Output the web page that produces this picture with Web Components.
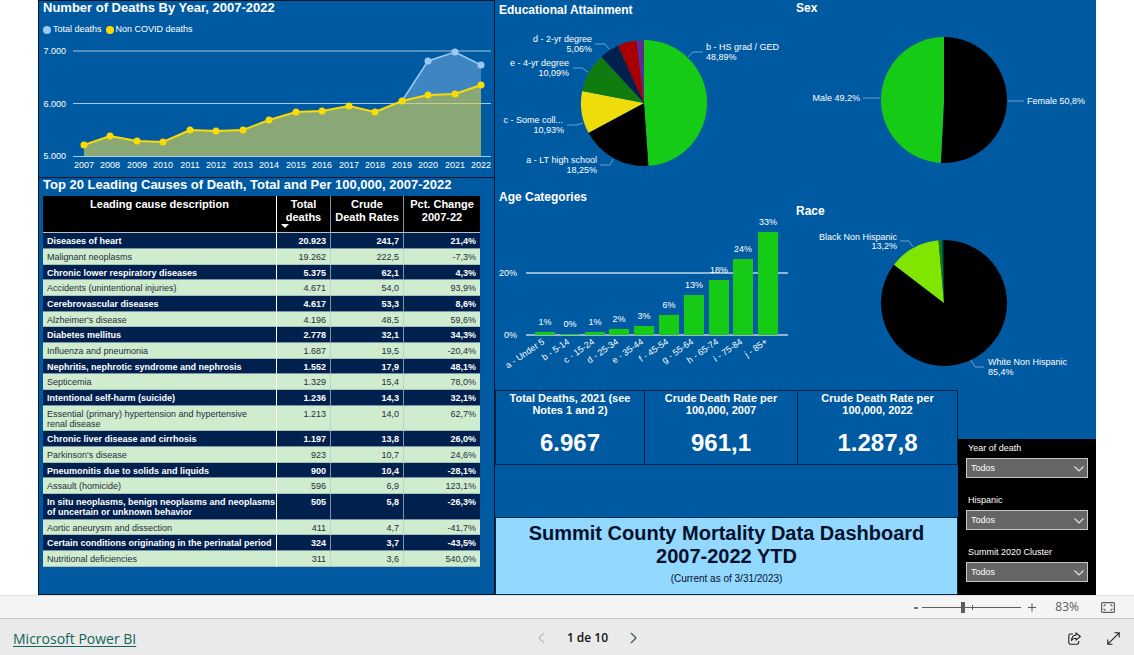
<!DOCTYPE html>
<html lang="en">
<head>
<meta charset="utf-8">
<title>Summit County Mortality Data Dashboard</title>
<style>
  html, body { margin: 0; background: #fff; }
  body { font-family: "Liberation Sans", Arial, sans-serif; }
</style>
</head>
<body>
<mortality-app></mortality-app>

<script>
const define = (name, render) => customElements.define(name, class extends HTMLElement {
  connectedCallback() {
    if (this.shadowRoot) return;
    const root = this.attachShadow({ mode: 'open' });
    const tpl = document.createElement('template');
    tpl.innerHTML = render(this);
    root.append(tpl.content.cloneNode(true));
  }
});

/* Bordered or plain report tile with a heading and slotted content */
define('report-tile', el => `
<style>
  :host { display: block; box-sizing: border-box; color: #fff; }
  :host([framed]) { border: 1px solid #001428; border-bottom: 0; }
  h2 { margin: 0; padding: 0 4px; font-size: 12px; line-height: 16px; font-weight: bold; white-space: nowrap; }
  :host([framed]) h2 { font-size: 13px; line-height: 14px; }
</style>
<h2>${el.getAttribute('heading')}</h2><slot></slot>`);

const chartStyle = `
  :host { display: block; }
  svg { display: block; width: 100%; height: auto; }
  text { font-size: 9px; fill: #fff; }`;

/* Area chart of deaths by year */
const nonCovid = [145, 136, 141, 142, 130, 131, 130, 120, 112, 111, 106, 112, 101, 95, 94, 85];
const total = [101, 61, 52, 65];
const yearX = i => Math.round(84 + i * 26.47);
define('year-chart', () => {
  const pts = nonCovid.map((y, i) => [yearX(i), y]);
  const tot = total.map((y, i) => [yearX(i + 12), y]);
  const all = pts.slice(0, 12).concat(tot);
  const area = p => `M84 156L${p.map(q => q.join(' ')).join('L')}L481 156Z`;
  const line = p => p.map(q => q.join(',')).join(' ');
  return `<style>${chartStyle}
  ul { display: flex; gap: 4px; list-style: none; margin: 0; padding: 8px 4px 4px; font-size: 9px; line-height: 13px; }
  li { display: flex; align-items: center; gap: 2px; }
  i { width: 8px; height: 8px; border-radius: 50%; background: var(--dot); }
  </style>
  <ul><li style="--dot:#9cc8f3"><i></i>Total deaths</li><li style="--dot:#fadb05"><i></i>Non COVID deaths</li></ul>
  <svg viewBox="39 40 455 137" role="img" aria-label="Number of deaths by year">
    <g stroke="#a8c8e2" stroke-width="1"><path d="M73 51H491M73 103.500H491M73 156.500H491"/></g>
    <path d="${area(all)}" fill="#9cc8f3" fill-opacity=".4"/>
    <polyline points="${line(tot)}" fill="none" stroke="#9cc8f3" stroke-width="1.500"/>
    <path d="${area(pts)}" fill="#fadb05" fill-opacity=".4"/>
    <polyline points="${line(pts)}" fill="none" stroke="#fadb05" stroke-width="2"/>
    ${tot.slice(1).map(p => `<circle cx="${p[0]}" cy="${p[1]}" r="3.500" fill="#9cc8f3"/>`).join('')}
    ${pts.map(p => `<circle cx="${p[0]}" cy="${p[1]}" r="3.500" fill="#fadb05"/>`).join('')}
    <g text-anchor="end"><text x="66" y="54">7.000</text><text x="66" y="107">6.000</text><text x="66" y="159">5.000</text></g>
    <g text-anchor="middle">${pts.map((p, i) => `<text x="${p[0]}" y="168">${2007 + i}</text>`).join('')}</g>
  </svg>`;
});

/* Table of leading causes */
const causes = [
  ['Diseases of heart', '20.923', '241,7', '21,4%'],
  ['Malignant neoplasms', '19.262', '222,5', '-7,3%'],
  ['Chronic lower respiratory diseases', '5.375', '62,1', '4,3%'],
  ['Accidents (unintentional injuries)', '4.671', '54,0', '93,9%'],
  ['Cerebrovascular diseases', '4.617', '53,3', '8,6%'],
  ['Alzheimer\'s disease', '4.196', '48,5', '59,6%'],
  ['Diabetes mellitus', '2.778', '32,1', '34,3%'],
  ['Influenza and pneumonia', '1.687', '19,5', '-20,4%'],
  ['Nephritis, nephrotic syndrome and nephrosis', '1.552', '17,9', '48,1%'],
  ['Septicemia', '1.329', '15,4', '78,0%'],
  ['Intentional self-harm (suicide)', '1.236', '14,3', '32,1%'],
  ['Essential (primary) hypertension and hypertensive<br>renal disease', '1.213', '14,0', '62,7%'],
  ['Chronic liver disease and cirrhosis', '1.197', '13,8', '26,0%'],
  ['Parkinson\'s disease', '923', '10,7', '24,6%'],
  ['Pneumonitis due to solids and liquids', '900', '10,4', '-28,1%'],
  ['Assault (homicide)', '596', '6,9', '123,1%'],
  ['In situ neoplasms, benign neoplasms and neoplasms<br>of uncertain or unknown behavior', '505', '5,8', '-26,3%'],
  ['Aortic aneurysm and dissection', '411', '4,7', '-41,7%'],
  ['Certain conditions originating in the perinatal period', '324', '3,7', '-43,5%'],
  ['Nutritional deficiencies', '311', '3,6', '540,0%']
];
define('causes-table', () => `
<style>
  :host { display: block; padding: 4px 14px 0 4px; }
  table { width: 100%; table-layout: fixed; border-collapse: separate; border-spacing: 0; font-size: 9px; line-height: 10px; }
  .c1 { width: 54px; } .c2 { width: 73px; } .c3 { width: 77px; }
  th, td { box-sizing: border-box; vertical-align: top; }
  th { position: relative; height: 37px; padding: 2px 2px 0; background: #000; font-size: 11px; line-height: 13px; text-align: center; border-bottom: 1px solid #b9c0c8; }
  th + th, td + td { border-left: 1px solid #8493ab; }
  th:nth-child(2), td:nth-child(2) { border-left-color: #fff; }
  th svg { position: absolute; left: 4px; bottom: 4px; display: block; }
  td { height: 16px; padding: 3px 4px 2px; text-align: right; border-bottom: 1px solid #7f93a8; white-space: nowrap; }
  tr:nth-child(3n) td { height: 15px; padding-bottom: 1px; }
  td:first-child { text-align: left; }
  tr:nth-child(odd) td { background: #00204e; font-weight: bold; }
  tr:nth-child(even) td { background: #d0eccf; color: #252c3c; border-bottom-color: #a9c0b8; }
  tr:nth-child(even) td:nth-child(n+3) { border-left-color: #b4d6cf; }
</style>
<table>
  <colgroup><col><col class="c1"><col class="c2"><col class="c3"></colgroup>
  <thead><tr><th scope="col">Leading cause description</th>
  <th scope="col">Total<br>deaths<svg width="8" height="4" viewBox="0 0 8 4"><path d="M0 0H8L4 4Z" fill="#fff"/></svg></th>
  <th scope="col">Crude<br>Death Rates</th><th scope="col">Pct. Change<br>2007-22</th></tr></thead>
  <tbody>${causes.map(r => `<tr>${r.map(c => `<td>${c}</td>`).join('')}</tr>`).join('')}</tbody>
</table>`);

/* Pie chart: slices are [percent, colour]; labels sit beside their leader lines */
const pies = {
  education: {
    box: '495 18 297 168', cx: 644, cy: 103,
    slices: [[48.89, '#16cb16'], [18.25, '#000'], [10.93, '#eedd0a'], [10.09, '#107c10'], [5.06, '#00204e'], [4.9, '#a80000'], [1.88, '#5c2d91']],
    leaders: 'M595 44H605L609 49M573 68H582L588 72M567 125H577L583 123M600 165H610L613 159M703 52H693L688 57',
    labels: [['end', 592, 42, 'd - 2-yr degree'], ['end', 592, 52, '5,06%'], ['end', 569, 66, 'e - 4-yr degree'], ['end', 569, 76, '10,09%'],
      ['end', 563, 123, 'c - Some coll...'], ['end', 564, 133, '10,93%'], ['end', 597, 163, 'a - LT high school'], ['end', 597, 173, '18,25%'],
      ['start', 706, 50, 'b - HS grad / GED'], ['start', 706, 60, '48,89%']]
  },
  sex: {
    box: '792 16 304 172', cx: 944, cy: 100,
    slices: [[50.8, '#000'], [49.2, '#16cb16']],
    leaders: 'M863 98H880M1008 101H1024',
    labels: [['end', 860, 101, 'Male 49,2%'], ['start', 1027, 104, 'Female 50,8%']]
  },
  race: {
    box: '792 219 304 171', cx: 944, cy: 303,
    slices: [[85.4, '#000'], [13.2, '#80e600'], [0.95, '#107c10'], [0.45, '#00204e']],
    leaders: 'M900 241H909L913 247M971 360L975 367H984',
    labels: [['end', 897, 240, 'Black Non Hispanic'], ['end', 897, 249, '13,2%'], ['start', 988, 365, 'White Non Hispanic'], ['start', 988, 375, '85,4%']]
  }
};
define('pie-chart', el => {
  const p = pies[el.getAttribute('kind')], r = 63;
  let at = 0;
  const point = f => {
    const a = f * Math.PI * 2;
    return (p.cx + r * Math.sin(a)).toFixed(2) + ' ' + (p.cy - r * Math.cos(a)).toFixed(2);
  };
  const wedges = p.slices.map(([v, c]) => {
    const from = at; at += v / 100;
    return `<path d="M${p.cx} ${p.cy}L${point(from)}A${r} ${r} 0 ${v > 50 ? 1 : 0} 1 ${point(at)}Z" fill="${c}"/>`;
  }).join('');
  return `<style>${chartStyle}</style>
  <svg viewBox="${p.box}" role="img" aria-label="${el.getAttribute('kind')}">${wedges}
  <path d="${p.leaders}" fill="none" stroke="#6c9fca"/>
  ${p.labels.map(l => `<text text-anchor="${l[0]}" x="${l[1]}" y="${l[2]}">${l[3]}</text>`).join('')}</svg>`;
});

/* Column chart of age categories: label, share, top edge */
const ages = [['a - Under 5', '1%', 332], ['b - 5-14', '0%', 334], ['c - 15-24', '1%', 332], ['d - 25-34', '2%', 329], ['e - 35-44', '3%', 326],
  ['f - 45-54', '6%', 315], ['g - 55-64', '13%', 295], ['h - 65-74', '18%', 280], ['i - 75-84', '24%', 259], ['j - 85+', '33%', 232]];
define('age-chart', () => `<style>${chartStyle}</style>
  <svg viewBox="495 205 297 185" role="img" aria-label="Age categories">
  <path d="M526 273H788M526 335H788" stroke="#8fb6d8" stroke-width="2"/>
  ${ages.map(([n, v, y], i) => {
    const x = Math.round(535 + i * 24.8);
    return `<rect x="${x}" y="${y}" width="20" height="${335 - y}" fill="#16cb16"/>
    <text x="${x + 10}" y="${y - 7}" text-anchor="middle">${v}</text>
    <text transform="translate(${x + 10} 343) rotate(-35)" text-anchor="end">${n}</text>`;
  }).join('')}
  <g text-anchor="end"><text x="517" y="276">20%</text><text x="517" y="338">0%</text></g></svg>`);

define('kpi-card', el => `
<style>
  :host { display: flex; flex-direction: column; align-items: center; box-sizing: border-box; height: 75px; padding-top: 1px; border: 1px solid #002040; border-left-width: 0; color: #fff; font-weight: bold; }
  :host(:first-child) { border-left-width: 1px; }
  span { font-size: 11px; line-height: 12px; text-align: center; }
  strong { margin-top: 14px; font-size: 24px; line-height: 26px; }
</style><span><slot></slot></span><strong>${el.getAttribute('value')}</strong>`);

define('report-title', () => `
<style>
  :host { display: block; box-sizing: border-box; height: 78px; padding-top: 4px; text-align: center; background: #92d8ff; border: 1px solid #0c2a44; color: #05102c; }
  h1 { margin: 0; font-size: 20px; line-height: 23px; }
  p { margin: 5px 0 0; font-size: 10px; line-height: 12px; }
</style><h1>Summit County Mortality Data Dashboard<br>2007-2022 YTD</h1><p>(Current as of 3/31/2023)</p>`);

define('filter-slicer', el => `
<style>
  :host { display: block; color: #fff; }
  label { display: block; padding-left: 2px; font-size: 9px; line-height: 12px; }
  div { position: relative; margin-top: 4px; }
  select { display: block; width: 100%; height: 20px; padding: 0 4px; appearance: none; border: 1px solid #c8c8c8; border-radius: 0; background: #666; color: #fff; font: 9px/18px "Liberation Sans", Arial, sans-serif; }
  svg { position: absolute; right: 4px; top: 8px; pointer-events: none; }
</style>
<label for="choice">${el.getAttribute('label')}</label>
<div><select id="choice"><option>Todos</option></select>
<svg width="10" height="6" viewBox="0 0 10 6"><path d="M.5 .5L5 5L9.500 .5" fill="none" stroke="#e8e8e8" stroke-width="1.100"/></svg></div>`);

define('zoom-bar', () => `
<style>
  :host { display: flex; justify-content: flex-end; align-items: center; box-sizing: border-box; height: 23px; padding-right: 19px; background: #f4f4f4; border-top: 1px solid #e1dfdd; color: #605e5c; font-family: "Open Sans", sans-serif; }
  button { padding: 0; border: 0; background: none; color: inherit; display: block; font: 12px/16px "Open Sans", sans-serif; }
  svg { display: block; }
  .range { position: relative; width: 99px; margin: 0 7px 0 4px; }
  .range::after { content: ""; position: absolute; left: 50px; top: 6px; width: 1px; height: 5px; background: #605e5c; }
  input { display: block; appearance: none; width: 100%; height: 16px; margin: 0; background: linear-gradient(#605e5c, #605e5c) center / 100% 1px no-repeat; }
  input::-webkit-slider-thumb { appearance: none; width: 4px; height: 11px; background: #605e5c; }
  .pct { margin: 0 22px 0 19px; }
</style>
<button aria-label="Zoom out"><svg width="5" height="9" viewBox="0 0 5 9"><path d="M1 5H5" stroke="#444" stroke-width="1.400"/></svg></button>
<div class="range"><input type="range" aria-label="Zoom" min="0" max="100" value="41"></div>
<button aria-label="Zoom in"><svg width="8" height="9" viewBox="0 0 8 9"><path d="M0 4.500H8M4 .5V8.500" stroke="#555"/></svg></button>
<button class="pct">83%</button>
<button aria-label="Fit to page"><svg width="14" height="11" viewBox="0 0 14 11"><rect x=".6" y=".6" width="12.800" height="9.800" rx="1" fill="none" stroke="#605e5c" stroke-width="1.200"/><path d="M3 4.500V3H5M9 3H11V4.500M11 6.500V8H9M5 8H3V6.500" fill="none" stroke="#605e5c"/></svg></button>`);

define('page-footer', () => `
<style>
  :host { display: grid; grid-template-columns: 1fr auto 1fr; align-items: center; box-sizing: border-box; height: 37px; padding: 2px 14px 0 13px; background: #eaeaea; border-top: 1px solid #c8c6c4; font-family: "Open Sans", sans-serif; }
  a { color: #0f6656; font-size: 14px; line-height: 20px; text-decoration: underline; text-underline-offset: 2px; }
  nav { display: flex; align-items: center; gap: 22px; padding-left: 42px; font-size: 12px; line-height: 20px; font-weight: 600; color: #111; }
  button { display: block; padding: 0; border: 0; background: none; }
  svg { display: block; fill: none; }
  .tools { display: flex; justify-content: flex-end; gap: 26px; }
</style>
<div><a href="#">Microsoft Power BI</a></div>
<nav aria-label="Pages">
  <button aria-label="Previous page" disabled><svg width="7" height="12" viewBox="0 0 7 12"><path d="M6 1L1 6L6 11" stroke="#bdbdbd" stroke-width="1.200"/></svg></button>
  <span>1 de 10</span>
  <button aria-label="Next page"><svg width="7" height="12" viewBox="0 0 7 12"><path d="M1 1L6 6L1 11" stroke="#3c5a48" stroke-width="1.300"/></svg></button>
</nav>
<div class="tools">
  <button aria-label="Share"><svg width="13" height="13" viewBox="0 0 13 13" stroke="#222" stroke-width="1.100" stroke-linejoin="round"><path d="M5 2H2.500Q.8 2 .8 3.700V10.500Q.8 12.200 2.500 12.200H9Q10.700 12.200 10.700 10.500V9"/><path d="M8 .8L12.300 4.500L8 8.200V6.200Q5 6 3.500 8.500Q3.800 3.500 8 3Z"/></svg></button>
  <button aria-label="Full screen"><svg width="13" height="13" viewBox="0 0 13 13" stroke="#222" stroke-width="1.100"><path d="M.8 12.200L12.200.8M7.500.8H12.200V5.500M.8 7.500V12.200H5.500"/></svg></button>
</div>`);

define('mortality-app', () => `
<style>
  :host { display: block; }
  main { display: grid; grid-template-columns: 457fr 601fr; margin: 0 38px; background: #005aa1; }
  .left { display: grid; grid-template-rows: auto 1fr; border-bottom: 1px solid #001428; }
  .charts { display: grid; grid-template-columns: 297fr 304fr; }
  .edu { padding-top: 2px; } .age { padding-top: 3px; } .race { padding-top: 15px; }
  .charts > div { min-width: 0; }
  .lower { display: grid; grid-template-columns: 463fr 138fr; align-items: end; }
  .kpis { display: grid; grid-template-columns: 150fr 153fr 160fr; margin-bottom: 52px; }
  .slicers { display: grid; gap: 16px; box-sizing: border-box; height: 156px; align-content: start; padding: 3px 8px 0; background: #000; }
</style>
<main>
  <div class="left">
    <report-tile framed heading="Number of Deaths By Year, 2007-2022"><year-chart></year-chart></report-tile>
    <report-tile framed heading="Top 20 Leading Causes of Death, Total and Per 100,000, 2007-2022"><causes-table></causes-table></report-tile>
  </div>
  <div class="right">
    <div class="charts">
      <div>
        <report-tile class="edu" heading="Educational Attainment"><pie-chart kind="education"></pie-chart></report-tile>
        <report-tile class="age" heading="Age Categories"><age-chart></age-chart></report-tile>
      </div>
      <div>
        <report-tile heading="Sex"><pie-chart kind="sex"></pie-chart></report-tile>
        <report-tile class="race" heading="Race"><pie-chart kind="race"></pie-chart></report-tile>
      </div>
    </div>
    <div class="lower">
      <div>
        <div class="kpis">
          <kpi-card value="6.967">Total Deaths, 2021 (see<br>Notes 1 and 2)</kpi-card>
          <kpi-card value="961,1">Crude Death Rate per<br>100,000, 2007</kpi-card>
          <kpi-card value="1.287,8">Crude Death Rate per<br>100,000, 2022</kpi-card>
        </div>
        <report-title></report-title>
      </div>
      <div class="slicers">
        <filter-slicer label="Year of death"></filter-slicer>
        <filter-slicer label="Hispanic"></filter-slicer>
        <filter-slicer label="Summit 2020 Cluster"></filter-slicer>
      </div>
    </div>
  </div>
</main>
<zoom-bar></zoom-bar>
<page-footer></page-footer>`);
</script>
</body>
</html>
